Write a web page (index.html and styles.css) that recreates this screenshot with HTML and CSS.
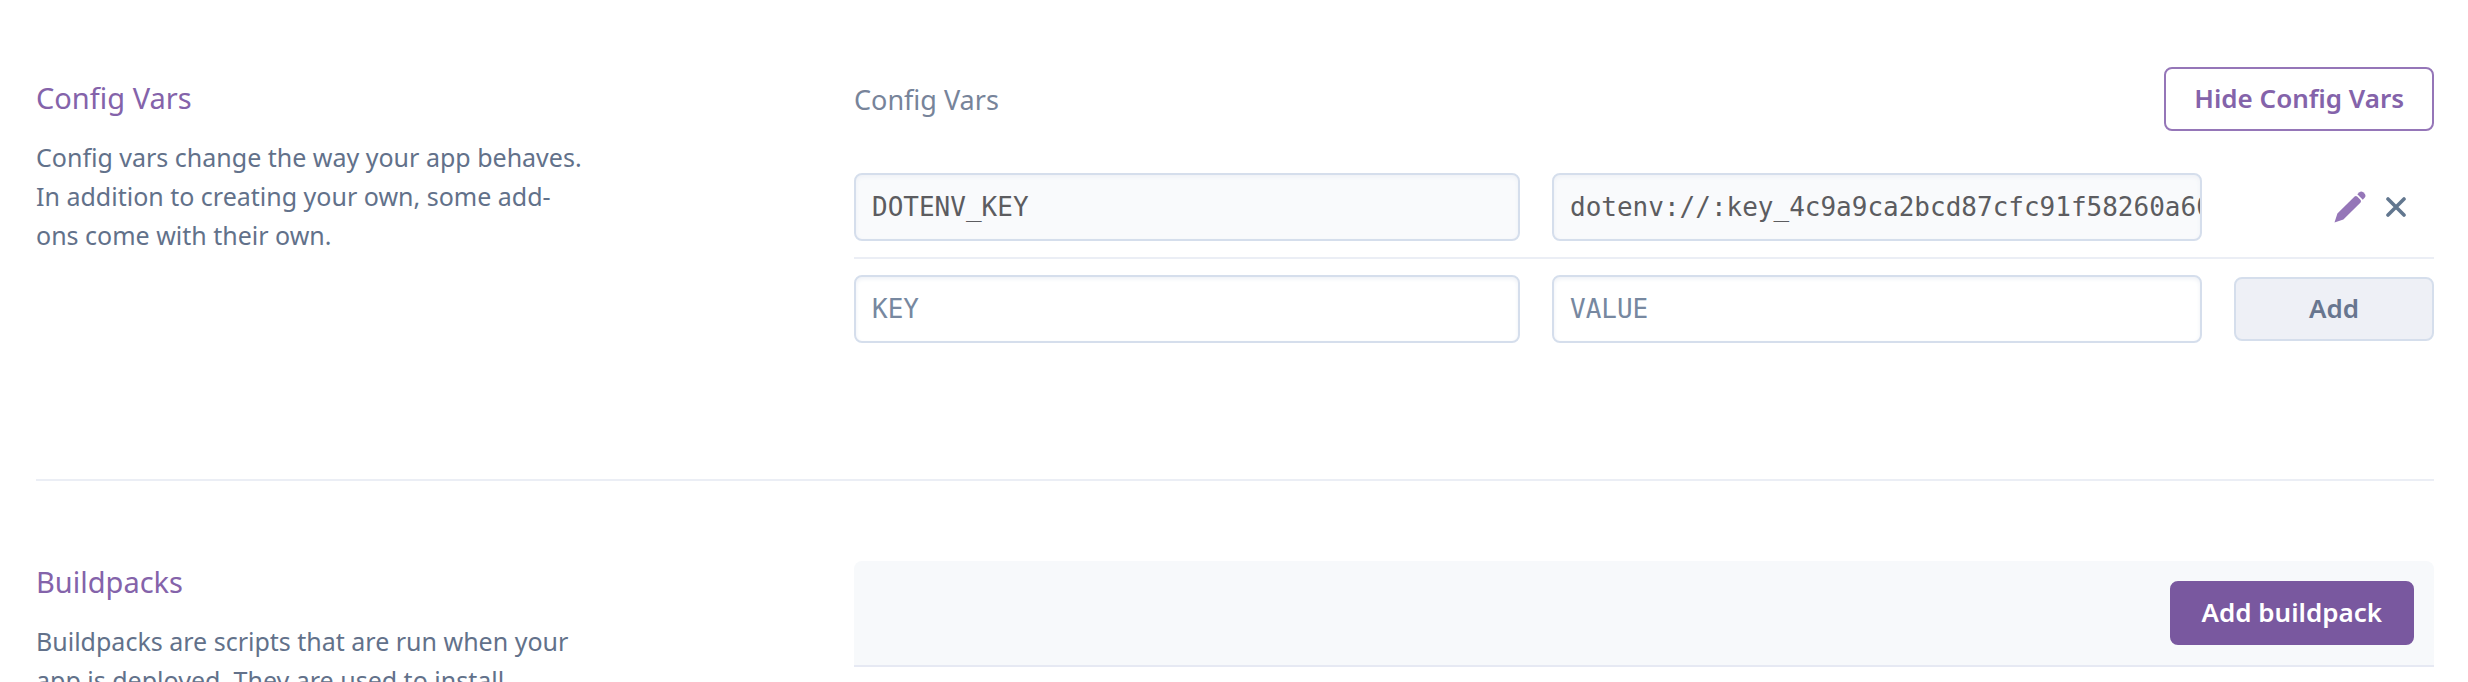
FILE: index.html
```html
<!DOCTYPE html>
<html lang="en">
<head>
<meta charset="utf-8">
<title>Settings</title>
<link rel="stylesheet" href="styles.css">
</head>
<body>
<main class="settings">
  <section class="section">
    <div class="intro">
      <h2 class="intro-title">Config Vars</h2>
      <p class="intro-text">Config vars change the way your app behaves. In addition to creating your own, some add-ons come with their own.</p>
    </div>
    <div class="vars">
      <div class="vars-head">
        <h3 class="vars-title">Config Vars</h3>
        <button class="btn btn-outline" type="button">Hide Config Vars</button>
      </div>
      <div class="var-row var-row-saved">
        <input class="field field-saved" type="text" aria-label="Config var key" value="DOTENV_KEY" readonly>
        <input class="field field-saved" type="text" aria-label="Config var value" value="dotenv://:key_4c9a9ca2bcd87cfc91f58260a60" readonly>
        <div class="actions">
          <button class="icon-btn" type="button" aria-label="Edit">
            <svg width="32" height="32" viewBox="0 0 32 32" fill="#9576b8"><path d="M0.5 31.5 L3.4 22.6 L20.6 5.4 Q22 4.4 23.2 5.6 L26.4 8.8 Q27.6 10 26.6 11.4 L9.4 28.6 Z"/><path d="M23.3 3.2 L25.4 1.2 Q27.3 -0.2 29.2 1.3 L30.7 2.8 Q32.2 4.7 30.8 6.6 L28.8 8.7 Z"/></svg>
          </button>
          <button class="icon-btn" type="button" aria-label="Remove">
            <svg width="20" height="20" viewBox="0 0 20 20" fill="none" stroke="#62778f" stroke-width="3.6" stroke-linecap="round"><path d="M2 2 L18 18 M18 2 L2 18"/></svg>
          </button>
        </div>
      </div>
      <form class="var-row">
        <input class="field" type="text" aria-label="New key" placeholder="KEY">
        <input class="field" type="text" aria-label="New value" placeholder="VALUE">
        <button class="btn btn-muted" type="button">Add</button>
      </form>
    </div>
  </section>
  <section class="section section-divided">
    <div class="intro">
      <h2 class="intro-title">Buildpacks</h2>
      <p class="intro-text">Buildpacks are scripts that are run when your app is deployed. They are used to install</p>
    </div>
    <div class="panel">
      <button class="btn btn-primary" type="button">Add buildpack</button>
    </div>
  </section>
</main>
</body>
</html>
```
FILE: styles.css
```css
* { box-sizing: border-box; }
body {
  margin: 0;
  height: 100vh;
  overflow: hidden;
  background: #fff;
  color: #62718a;
  font-family: "Noto Sans", "Open Sans", sans-serif;
  font-size: 26px;
}
.settings { padding: 0 34px 0 36px; }
.section {
  display: grid;
  grid-template-columns: minmax(0, 818fr) minmax(0, 1580fr);
  align-items: start;
  padding: 67px 0 136px;
}
.section-divided {
  border-top: 2px solid #ebeef5;
  padding-top: 80px;
}
.intro { padding-top: 11px; }
.section-divided .intro { padding-top: 1px; }
.intro-title {
  margin: 0 0 20px;
  color: #8463aa;
  font-size: 29px;
  font-weight: 400;
  line-height: 40px;
}
.intro-text {
  margin: 0;
  max-width: 550px;
  font-size: 25px;
  line-height: 39px;
}
.vars-head {
  display: flex;
  align-items: center;
  justify-content: space-between;
  margin-bottom: 42px;
}
.vars-title {
  margin: 0;
  color: #77849a;
  font-size: 27px;
  font-weight: 400;
}
.var-row {
  display: grid;
  grid-template-columns: minmax(0, 666fr) minmax(0, 650fr) 200px;
  column-gap: 32px;
  align-items: center;
}
.var-row-saved {
  padding-bottom: 16px;
  margin-bottom: 16px;
  border-bottom: 2px solid #ebeef5;
}
.field {
  width: 100%;
  height: 68px;
  padding: 0 0 0 16px;
  border: 2px solid #d5deec;
  border-radius: 8px;
  background: #fff;
  box-shadow: inset 0 2px 4px #eef1f6;
  color: #5c5c60;
  font-family: "DejaVu Sans Mono", monospace;
  font-size: 26px;
}
.field-saved { background: #f9fafc; }
.field::placeholder { color: #7788a0; opacity: 1; }
.actions {
  display: flex;
  align-items: center;
  justify-content: flex-end;
  gap: 20px;
  padding-right: 28px;
}
.icon-btn {
  display: flex;
  padding: 0;
  border: 0;
  background: none;
}
.btn {
  height: 64px;
  padding: 0 30px 2px;
  border: 2px solid;
  border-radius: 8px;
  font-family: inherit;
  font-size: 26px;
  font-weight: 600;
}
.btn-outline {
  padding: 0 28px 2px;
  background: #fff;
  border-color: #9576b8;
  color: #8463aa;
}
.btn-muted { background: #eef0f6; border-color: #d5deec; color: #68768f; }
.btn-primary { background: #79589f; border-color: #79589f; color: #fff; }
.panel {
  display: flex;
  justify-content: flex-end;
  padding: 20px;
  border-bottom: 2px solid #e6e9f3;
  border-radius: 8px 8px 0 0;
  background: #f7f9fb;
}
```
